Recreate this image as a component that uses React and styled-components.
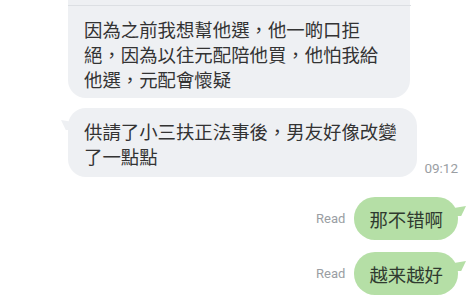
import styled, { createGlobalStyle } from "styled-components";

const GlobalStyle = createGlobalStyle`
  html, body {
    margin: 0;
    padding: 0;
    background: #ffffff;
  }
  body {
    font-family: Roboto, "Noto Sans CJK TC", sans-serif;
  }
`;

const Chat = styled.div`
  width: 469px;
  height: 300px;
  overflow: hidden;
  display: flex;
  flex-direction: column;
  padding: 0 11px 0 68px;
  box-sizing: border-box;
  background: #ffffff;
`;

const Row = styled.div`
  display: flex;
  align-items: ${(p) => (p.$mine ? "center" : "flex-end")};
  justify-content: ${(p) => (p.$mine ? "flex-end" : "flex-start")};
  gap: ${(p) => (p.$mine ? "9px" : "7px")};
  margin-top: ${(p) => p.$top || 0}px;
`;

const Bubble = styled.div`
  position: relative;
  box-sizing: border-box;
  width: ${(p) => (p.$width ? `${p.$width}px` : "auto")};
  background: #eef0f3;
  color: #333333;
  font-family: "Noto Sans CJK TC", sans-serif;
  font-size: 18.4px;
  line-height: 25px;
  white-space: pre-line;
  padding: 11px 16px 8px 16px;
  border-radius: 18px;
`;

const CutBubble = styled(Bubble)`
  border-radius: 0 0 18px 18px;
  padding-top: 17px;
  padding-bottom: 6px;
  &::before {
    content: "";
    position: absolute;
    left: 0;
    right: -1px;
    top: 5px;
    height: 1px;
    background: #dcdfe3;
  }
`;

const TailBubble = styled(Bubble)`
  &::after {
    content: "";
    position: absolute;
    left: -7px;
    top: 12px;
    width: 12px;
    height: 10px;
    background: #eef0f3;
    clip-path: polygon(0 0, 100% 20%, 100% 100%, 40% 100%);
  }
`;

const GreenBubble = styled.div`
  position: relative;
  background: #b5dfa6;
  color: #2f3a2f;
  font-family: "Noto Sans CJK SC", sans-serif;
  font-size: 18.4px;
  line-height: 26px;
  padding: 9px 15px 8px 15px;
  border-radius: 21px;
  &::after {
    content: "";
    position: absolute;
    right: -8px;
    top: 9px;
    width: 12px;
    height: 10px;
    background: #b5dfa6;
    clip-path: polygon(100% 0, 0 20%, 0 100%, 60% 100%);
  }
`;

const Meta = styled.span`
  font-family: Roboto, sans-serif;
  font-size: ${(p) => p.$size || 13}px;
  color: #9a9ea3;
  line-height: 16px;
  padding-bottom: ${(p) => p.$bottom || 0}px;
`;

export default function App() {
  return (
    <>
      <GlobalStyle />
      <Chat>
        <Row>
          <CutBubble $width={342}>
            {"因為之前我想幫他選，他一啲口拒\n絕，因為以往元配陪他買，他怕我給\n他選，元配會懷疑"}
          </CutBubble>
        </Row>
        <Row $top={10}>
          <TailBubble $width={350}>
            {"供請了小三扶正法事後，男友好像改變\n了一點點"}
          </TailBubble>
          <Meta $size={13.5} $bottom={1}>09:12</Meta>
        </Row>
        <Row $mine $top={20}>
          <Meta>Read</Meta>
          <GreenBubble>那不错啊</GreenBubble>
        </Row>
        <Row $mine $top={12}>
          <Meta>Read</Meta>
          <GreenBubble>越来越好</GreenBubble>
        </Row>
      </Chat>
    </>
  );
}
